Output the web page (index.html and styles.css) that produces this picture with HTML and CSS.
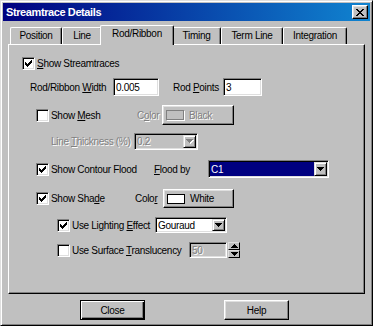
FILE: index.html
```html
<!DOCTYPE html>
<html>
<head>
    <meta charset="UTF-8">
    <title>Streamtrace Details</title>
    <link rel="stylesheet" href="styles.css">
</head>
<body>
<div class="dlg">
    <div class="caption">
        <span class="caption-text">Streamtrace Details</span>
        <span class="caption-close">
            <svg width="8" height="7" viewBox="0 0 8 7" shape-rendering="crispEdges"><path d="M0 0h2v1H0zM6 0h2v1H6zM1 1h2v1H1zM5 1h2v1H5zM2 2h4v1H2zM3 3h2v1H3zM2 4h4v1H2zM1 5h2v1H1zM5 5h2v1H5zM0 6h2v1H0zM6 6h2v1H6z"/></svg>
        </span>
    </div>

    <div class="tabs">
        <div class="tab t-pos">Position</div>
        <div class="tab t-line">Line</div>
        <div class="tab t-rod active">Rod/Ribbon</div>
        <div class="tab t-timing">Timing</div>
        <div class="tab t-term">Term Line</div>
        <div class="tab t-integ">Integration</div>
    </div>

    <div class="panel">
        <!-- show streamtraces -->
        <div class="row r1">
            <span class="chk"><svg width="7" height="7" viewBox="0 0 7 7" shape-rendering="crispEdges"><path d="M6 0h1v1H6zM5 1h2v1H5zM0 2h1v1H0zM4 2h3v1H4zM0 3h2v1H0zM3 3h3v1H3zM0 4h5v1H0zM1 5h3v1H1zM2 6h1v1H2z"/></svg></span>
            <span class="lbl"><u>S</u>how Streamtraces</span>
        </div>

        <div class="row r2">
            <span class="lbl w-rodw">Rod/Ribbon <u>W</u>idth</span>
            <span class="edit w-edit1">0.005</span>
            <span class="lbl w-rodp">Rod <u>P</u>oints</span>
            <span class="edit w-edit2">3</span>
        </div>

        <!-- mesh (disabled children) -->
        <div class="row r3">
            <span class="chk"></span>
            <span class="lbl w-mesh">Show <u>M</u>esh</span>
            <span class="lbl dis w-color1">C<u>o</u>lor</span>
            <span class="btn colorbtn w-cbtn1">
                <span class="swatch off"></span>
                <span class="dis">Black</span>
            </span>
        </div>

        <div class="row r4">
            <span class="lbl dis w-thick">Line <u>T</u>hickness (%)</span>
            <span class="combo off w-combo1">
                <span class="combo-text dis">0.2</span>
                <span class="combo-btn"><svg width="8" height="5" viewBox="0 0 8 5" shape-rendering="crispEdges"><path fill="#fff" d="M1 1h7v1H1zM2 2h5v1H2zM3 3h3v1H3zM4 4h1v1H4z"/><path fill="#808080" d="M0 0h7v1H0zM1 1h5v1H1zM2 2h3v1H2zM3 3h1v1H3z"/></svg></span>
            </span>
        </div>

        <!-- contour flood -->
        <div class="row r5">
            <span class="chk"><svg width="7" height="7" viewBox="0 0 7 7" shape-rendering="crispEdges"><path d="M6 0h1v1H6zM5 1h2v1H5zM0 2h1v1H0zM4 2h3v1H4zM0 3h2v1H0zM3 3h3v1H3zM0 4h5v1H0zM1 5h3v1H1zM2 6h1v1H2z"/></svg></span>
            <span class="lbl w-flood">Show Contour Flood</span>
            <span class="lbl w-floodby"><u>F</u>lood by</span>
            <span class="combo w-combo2">
                <span class="combo-text sel">C1</span>
                <span class="combo-btn"><svg width="7" height="4" viewBox="0 0 7 4" shape-rendering="crispEdges"><path d="M0 0h7v1H0zM1 1h5v1H1zM2 2h3v1H2zM3 3h1v1H3z"/></svg></span>
            </span>
        </div>

        <!-- shade -->
        <div class="row r6">
            <span class="chk"><svg width="7" height="7" viewBox="0 0 7 7" shape-rendering="crispEdges"><path d="M6 0h1v1H6zM5 1h2v1H5zM0 2h1v1H0zM4 2h3v1H4zM0 3h2v1H0zM3 3h3v1H3zM0 4h5v1H0zM1 5h3v1H1zM2 6h1v1H2z"/></svg></span>
            <span class="lbl w-shade">Show Sha<u>d</u>e</span>
            <span class="lbl w-color2">Colo<u>r</u></span>
            <span class="btn colorbtn w-cbtn2">
                <span class="swatch"></span>
                <span>White</span>
            </span>
        </div>

        <div class="row r7">
            <span class="chk"><svg width="7" height="7" viewBox="0 0 7 7" shape-rendering="crispEdges"><path d="M6 0h1v1H6zM5 1h2v1H5zM0 2h1v1H0zM4 2h3v1H4zM0 3h2v1H0zM3 3h3v1H3zM0 4h5v1H0zM1 5h3v1H1zM2 6h1v1H2z"/></svg></span>
            <span class="lbl w-light">Use Lighting <u>E</u>ffect</span>
            <span class="combo w-combo3">
                <span class="combo-text">Gouraud</span>
                <span class="combo-btn"><svg width="7" height="4" viewBox="0 0 7 4" shape-rendering="crispEdges"><path d="M0 0h7v1H0zM1 1h5v1H1zM2 2h3v1H2zM3 3h1v1H3z"/></svg></span>
            </span>
        </div>

        <div class="row r8">
            <span class="chk"></span>
            <span class="lbl w-transl">Use Surface <u>T</u>ranslucency</span>
            <span class="edit off w-edit3"><span class="dis">50</span></span>
            <span class="spin">
                <span class="spin-btn"><svg width="7" height="4" viewBox="0 0 7 4" shape-rendering="crispEdges"><path d="M3 0h1v1H3zM2 1h3v1H2zM1 2h5v1H1zM0 3h7v1H0z"/></svg></span>
                <span class="spin-btn"><svg width="7" height="4" viewBox="0 0 7 4" shape-rendering="crispEdges"><path d="M0 0h7v1H0zM1 1h5v1H1zM2 2h3v1H2zM3 3h1v1H3z"/></svg></span>
            </span>
        </div>
    </div>

    <div class="bottom">
        <span class="btn default w-push">Close</span>
        <span class="btn w-push w-help">Help</span>
    </div>
</div>
</body>
</html>
```

FILE: styles.css
```css
* {
    margin: 0;
    padding: 0;
    box-sizing: border-box;
}

body {
    background: #c0c0c0;
    font-family: "Liberation Sans", Arial, sans-serif;
    font-size: 10px;
    letter-spacing: -0.3px;
    color: #000;
}

u {
    text-decoration: underline;
    text-underline-offset: 1px;
}

/* window frame */
.dlg {
    width: 373px;
    height: 326px;
    padding: 2px;
    background: #c0c0c0;
    border: 1px solid;
    border-color: #dfdfdf #000 #000 #dfdfdf;
    box-shadow: inset 1px 1px #fff, inset -1px -1px #808080;
}

.caption {
    display: flex;
    align-items: center;
    height: 18px;
    padding: 0 2px;
    background: linear-gradient(to right, #000080, #1084d0);
}

.caption-text {
    margin-left: 1px;
    font-size: 11px;
    font-weight: bold;
    letter-spacing: -0.4px;
    color: #fff;
}

.caption-close {
    display: flex;
    align-items: center;
    justify-content: center;
    width: 16px;
    height: 14px;
    margin-left: auto;
    background: #c0c0c0;
    border: 1px solid;
    border-color: #fff #000 #000 #fff;
    box-shadow: inset -1px -1px #808080, inset 1px 1px #dfdfdf;
}

/* tab strip */
.tabs {
    display: flex;
    align-items: flex-end;
    height: 19px;
    margin-top: 4px;
    padding-left: 7px;
}

.tab {
    height: 17px;
    line-height: 15px;
    text-align: center;
    border-top: 1px solid #fff;
    border-left: 1px solid #fff;
    border-right: 1px solid #000;
    border-radius: 2px 2px 0 0;
    box-shadow: inset -1px 0 #808080;
}

.tab.active {
    position: relative;
    z-index: 1;
    height: 20px;
    line-height: 16px;
    margin: 0 -2px -1px;
    background: #c0c0c0;
}

.t-pos { width: 52px; }
.t-line { width: 40px; }
.t-rod { width: 74px; }
.t-timing { width: 49px; }
.t-term { width: 62px; }
.t-integ { width: 64px; }

.panel {
    width: 357px;
    height: 250px;
    margin-left: 5px;
    padding-top: 11px;
    border: 1px solid;
    border-color: #fff #000 #000 #fff;
    box-shadow: inset -1px -1px #808080;
}

/* rows */
.row {
    display: flex;
    align-items: center;
}

.r1 { height: 15px; padding-left: 13px; }
.r2 { height: 18px; padding-left: 21px; margin-top: 7px; }
.r3 { height: 20px; padding-left: 27px; margin-top: 9px; }
.r4 { height: 17px; padding-left: 42px; margin-top: 8px; }
.r5 { height: 18px; padding-left: 27px; margin-top: 10px; }
.r6 { height: 19px; padding-left: 27px; margin-top: 11px; }
.r7 { height: 16px; padding-left: 48px; margin-top: 9px; }
.r8 { height: 16px; padding-left: 48px; margin-top: 9px; }

.lbl {
    white-space: nowrap;
}

.chk + .lbl {
    margin-left: 2px;
}

.w-rodw { width: 83px; }
.w-rodp { width: 50px; margin-left: 14px; }
.w-mesh { width: 86px; }
.w-color1 { width: 25px; }
.w-thick { width: 83px; }
.w-flood { width: 103px; }
.w-floodby { width: 54px; }
.w-shade { width: 84px; }
.w-color2 { width: 28px; }
.w-light { width: 83px; }
.w-transl { width: 117px; }

.w-edit1 { width: 46px; }
.w-edit2 { width: 39px; }
.w-edit3 { width: 38px; }
.w-combo1 { width: 64px; }
.w-combo2 { width: 121px; }
.w-combo3 { width: 72px; }
.w-cbtn1 { width: 72px; }
.w-cbtn2 { width: 71px; }

.dis {
    color: #808080;
    text-shadow: 1px 1px #fff;
}

/* checkbox */
.chk {
    display: flex;
    align-items: center;
    justify-content: center;
    flex: none;
    width: 13px;
    height: 13px;
    background: #fff;
    border: 1px solid;
    border-color: #808080 #fff #fff #808080;
    box-shadow: inset 1px 1px #000, inset -1px -1px #dfdfdf;
}

/* sunken fields */
.edit,
.combo {
    display: flex;
    align-items: center;
    height: 100%;
    padding: 1px;
    background: #fff;
    border: 1px solid;
    border-color: #808080 #fff #fff #808080;
    box-shadow: inset 1px 1px #000, inset -1px -1px #dfdfdf;
}

.edit {
    padding-left: 2px;
}

.edit.off,
.combo.off {
    background: #c0c0c0;
}

.combo-text {
    flex: 1;
    align-self: stretch;
    display: flex;
    align-items: center;
    padding-left: 1px;
}

.combo-text.sel {
    background: #000080;
    color: #fff;
}

.combo-btn {
    display: flex;
    align-items: center;
    justify-content: center;
    width: 13px;
    align-self: stretch;
    background: #c0c0c0;
    border: 1px solid;
    border-color: #dfdfdf #000 #000 #dfdfdf;
    box-shadow: inset 1px 1px #fff, inset -1px -1px #808080;
}

.spin {
    display: flex;
    flex-direction: column;
    width: 12px;
    height: 16px;
    margin-left: 1px;
}

.spin-btn {
    flex: 1;
    display: flex;
    align-items: center;
    justify-content: center;
    background: #c0c0c0;
    border: 1px solid;
    border-color: #dfdfdf #000 #000 #dfdfdf;
}

/* push buttons */
.btn {
    display: flex;
    align-items: center;
    justify-content: center;
    height: 100%;
    background: #c0c0c0;
    border: 1px solid;
    border-color: #fff #000 #000 #fff;
    box-shadow: inset -1px -1px #808080, inset 1px 1px #dfdfdf;
}

.btn.default {
    border-color: #000;
    box-shadow: inset 1px 1px #fff, inset -1px -1px #000, inset -2px -2px #808080;
}

.colorbtn {
    justify-content: flex-start;
    padding-left: 3px;
}

.swatch {
    width: 18px;
    height: 10px;
    margin-right: 5px;
    background: #fff;
    border: 1px solid #000;
}

.swatch.off {
    background: transparent;
    border-color: #808080;
    box-shadow: 1px 1px #fff;
}

.bottom {
    display: flex;
    height: 20px;
    margin-top: 6px;
    padding-left: 77px;
}

.w-push { width: 65px; }
.w-help { margin-left: 79px; }
```
